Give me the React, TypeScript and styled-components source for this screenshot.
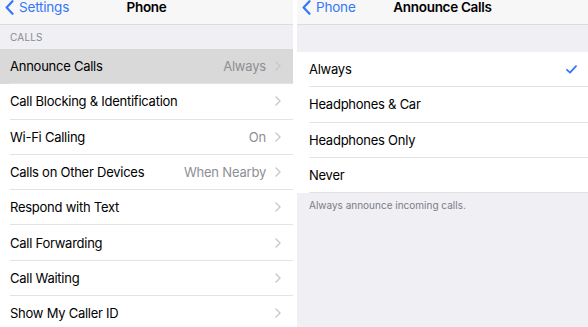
import styled, { createGlobalStyle } from 'styled-components'

const GlobalStyle = createGlobalStyle`
    html, body {
        margin: 0;
        padding: 0;
        background: #ffffff;
        font-family: Inter, "Noto Sans", sans-serif;
        -webkit-font-smoothing: antialiased;
    }
`

const leftRows = [
    { label: 'Announce Calls', value: 'Always', active: true },
    { label: 'Call Blocking & Identification' },
    { label: 'Wi-Fi Calling', value: 'On' },
    { label: 'Calls on Other Devices', value: 'When Nearby' },
    { label: 'Respond with Text' },
    { label: 'Call Forwarding' },
    { label: 'Call Waiting' },
    { label: 'Show My Caller ID' },
]

const options = ['Always', 'Headphones & Car', 'Headphones Only', 'Never']

function BackIcon() {
    return (
        <svg width="9" height="15" viewBox="0 0 9 15">
            <path d="M7.5 1.2 L1.6 7.5 L7.5 13.8" fill="none" stroke="#3478f6" strokeWidth="2.2" strokeLinecap="round" strokeLinejoin="round" />
        </svg>
    )
}

function Chevron() {
    return (
        <svg width="6" height="10" viewBox="0 0 6 10">
            <path d="M1 1 L5 5 L1 9" fill="none" stroke="#c7c7cc" strokeWidth="1.4" strokeLinecap="round" strokeLinejoin="round" />
        </svg>
    )
}

function Check() {
    return (
        <svg width="11" height="9" viewBox="0 0 11 9">
            <path d="M1 4.8 L4 7.6 L10 1.2" fill="none" stroke="#3478f6" strokeWidth="1.8" strokeLinecap="round" strokeLinejoin="round" />
        </svg>
    )
}

export default function App() {
    return (
        <>
            <GlobalStyle />
            <ScreenSld>
                <PanelSld>
                    <NavBarSld>
                        <BackSld>
                            <BackIcon />
                            <span>Settings</span>
                        </BackSld>
                        <NavTitleSld>Phone</NavTitleSld>
                    </NavBarSld>
                    <SectionHeaderSld>CALLS</SectionHeaderSld>
                    <ListSld>
                        {leftRows.map((row) => (
                            <RowSld key={row.label} $active={row.active}>
                                <RowInnerSld>
                                    <LabelSld>{row.label}</LabelSld>
                                    {row.value && <ValueSld>{row.value}</ValueSld>}
                                    <Chevron />
                                </RowInnerSld>
                            </RowSld>
                        ))}
                    </ListSld>
                </PanelSld>
                <PanelSld $gray>
                    <NavBarSld>
                        <BackSld>
                            <BackIcon />
                            <span>Phone</span>
                        </BackSld>
                        <NavTitleSld>Announce Calls</NavTitleSld>
                    </NavBarSld>
                    <SpacerSld />
                    <ListSld>
                        {options.map((opt, i) => (
                            <RowSld key={opt}>
                                <RowInnerSld $pad={12}>
                                    <LabelSld>{opt}</LabelSld>
                                    {i === 0 && <Check />}
                                </RowInnerSld>
                            </RowSld>
                        ))}
                    </ListSld>
                    <FooterSld>Always announce incoming calls.</FooterSld>
                </PanelSld>
            </ScreenSld>
        </>
    )
}

const ScreenSld = styled.div`
    display: grid;
    grid-template-columns: 293px 291px;
    column-gap: 4px;
    width: 588px;
    height: 327px;
    overflow: hidden;
`

const PanelSld = styled.div<{ $gray?: boolean }>`
    display: flex;
    flex-direction: column;
    background: ${(p) => (p.$gray ? '#efeff4' : '#ffffff')};
    overflow: hidden;
`

const NavBarSld = styled.div`
    position: relative;
    display: flex;
    align-items: flex-start;
    height: 24px;
    box-sizing: content-box;
    flex-shrink: 0;
    background: #f7f7f7;
    border-bottom: 1px solid #dcdce0;
    padding-left: 5px;
`

const BackSld = styled.div`
    display: flex;
    align-items: center;
    height: 15px;
    gap: 5px;
    color: #3478f6;
    font-size: 13.5px;
    line-height: 15px;
    letter-spacing: -0.2px;
`

const NavTitleSld = styled.div`
    position: absolute;
    top: 0;
    left: 0;
    right: 0;
    text-align: center;
    font-size: 13.5px;
    line-height: 15px;
    font-weight: 600;
    color: #000;
    pointer-events: none;
    letter-spacing: -0.3px;
`

const SectionHeaderSld = styled.div`
    height: 24px;
    display: flex;
    align-items: center;
    padding: 0 10px;
    background: #efeff4;
    color: #8a8a8f;
    font-size: 10px;
    letter-spacing: 0.2px;
    flex-shrink: 0;
`

const SpacerSld = styled.div`
    height: 27px;
    flex-shrink: 0;
`

const ListSld = styled.div`
    display: flex;
    flex-direction: column;
    background: #ffffff;
`

const RowSld = styled.div<{ $active?: boolean }>`
    height: 35.3px;
    background: ${(p) => (p.$active ? '#d9d9d9' : '#ffffff')};
    flex-shrink: 0;
`

const RowInnerSld = styled.div<{ $pad?: number }>`
    display: flex;
    align-items: center;
    gap: 9px;
    height: 100%;
    box-sizing: border-box;
    margin-left: ${(p) => p.$pad ?? 10}px;
    padding-right: ${(p) => (p.$pad ? 11 : 12)}px;
    border-bottom: 1px solid #e3e3e6;
`

const LabelSld = styled.div`
    flex: 1;
    font-size: 13px;
    color: #000;
    letter-spacing: -0.25px;
`

const ValueSld = styled.div`
    font-size: 13px;
    color: #8e8e93;
    letter-spacing: -0.2px;
`

const FooterSld = styled.div`
    padding: 6px 12px;
    font-size: 10px;
    color: #7d7d82;
`
